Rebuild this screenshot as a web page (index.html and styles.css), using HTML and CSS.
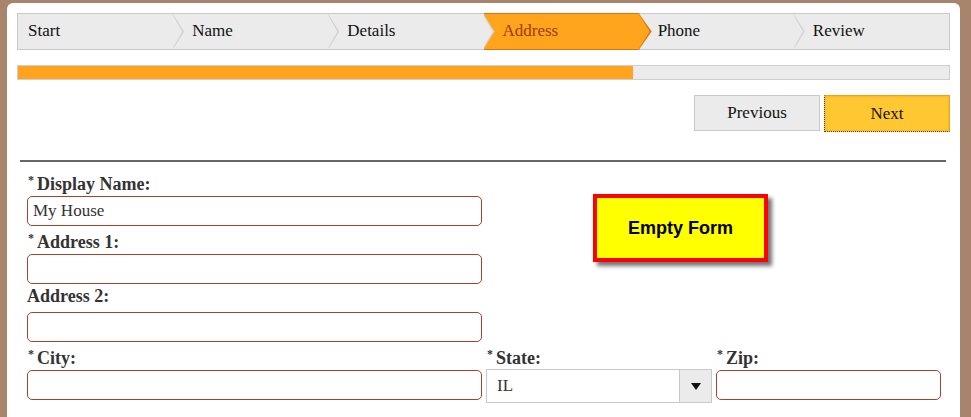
FILE: index.html
```html
<!DOCTYPE html>
<html>
<head>
<meta charset="utf-8">
<title>Wizard</title>
<link rel="stylesheet" href="styles.css">
</head>
<body>
<div class="panel">
  <ol class="steps">
    <li class="step first">Start</li>
    <li class="step">Name</li>
    <li class="step">Details</li>
    <li class="step active">Address</li>
    <li class="step">Phone</li>
    <li class="step last">Review</li>
  </ol>
  <div class="progress"><div class="bar" style="width:66.1%"></div></div>
  <div class="nav">
    <button class="btn prev">Previous</button>
    <button class="btn next">Next</button>
  </div>
  <hr class="rule">
  <form class="form">
    <div class="field f-name">
      <label class="lbl"><span class="req">*</span>Display Name:</label>
      <div class="input">My House</div>
    </div>
    <div class="field f-addr1">
      <label class="lbl"><span class="req">*</span>Address 1:</label>
      <div class="input"></div>
    </div>
    <div class="field f-addr2">
      <label class="lbl">Address 2:</label>
      <div class="input"></div>
    </div>
    <div class="field f-city">
      <label class="lbl"><span class="req">*</span>City:</label>
      <div class="input"></div>
    </div>
    <div class="field f-state">
      <label class="lbl"><span class="req">*</span>State:</label>
      <div class="select"><span class="sel-value">IL</span><span class="sel-arrow"><span class="tri"></span></span></div>
    </div>
    <div class="field f-zip">
      <label class="lbl"><span class="req">*</span>Zip:</label>
      <div class="input"></div>
    </div>
    <div class="note">Empty Form</div>
  </form>
</div>
</body>
</html>
```
FILE: styles.css
```css
html, body {
  margin: 0;
}
body {
  background: #a8846c;
  padding: 3px 11px 0 7px;
  height: 417px;
  box-sizing: border-box;
  overflow: hidden;
  font-family: "Liberation Serif", "Times New Roman", serif;
}
.panel {
  background: #fff;
  border-radius: 6px 6px 0 0;
  padding: 10px 10px 40px;
}
.steps {
  list-style: none;
  margin: 0;
  padding: 0;
  display: grid;
  grid-template-columns: repeat(6, 1fr);
  height: 35px;
  border: 1px solid #c9c9c9;
  background: #ebebeb;
}
.step {
  position: relative;
  display: flex;
  align-items: center;
  padding-left: 19px;
  padding-bottom: 2px;
  font-size: 17px;
  color: #111;
  min-width: 0;
}
.step.first {
  padding-left: 10px;
}
.step::before,
.step::after {
  content: "";
  position: absolute;
  top: 0;
  height: 100%;
  clip-path: polygon(0 0, 100% 50%, 0 100%);
  z-index: 1;
}
.step::before {
  width: 11px;
  right: -11px;
  background: #d4d4d4;
}
.step::after {
  width: 10px;
  right: -9px;
  background: #ebebeb;
  z-index: 2;
}
.step.last::before,
.step.last::after {
  display: none;
}
.step.active {
  background: #ffa41c;
  color: #9a3c0c;
  margin: -1px 0;
  border-top: 1px solid #d9760c;
  border-bottom: 1px solid #d9760c;
}
.step.active::before {
  top: -1px;
  height: calc(100% + 2px);
  width: 13px;
  right: -13px;
  background: #d9760c;
}
.step.active::after {
  top: 0;
  height: 100%;
  width: 11px;
  right: -11px;
  background: #ffa41c;
}
.progress {
  margin-top: 15px;
  height: 13px;
  border: 1px solid #cfcfcf;
  background: #ebebeb;
}
.bar {
  height: 100%;
  background: #ffa41c;
}
.nav {
  display: flex;
  justify-content: flex-end;
  gap: 4px;
  margin-top: 15px;
}
.btn {
  width: 126px;
  height: 36px;
  font-family: "Liberation Serif", "Times New Roman", serif;
  font-size: 17px;
  color: #111;
  cursor: pointer;
  padding: 0;
}
.btn.prev {
  background: #ebebeb;
  border: 1px solid #c9c9c9;
}
.btn.next {
  background: #ffc832;
  height: 37px;
  border-top: 1px solid #e9a21a;
  border-right: 1px solid #e9a21a;
  border-left: 1px dotted #444;
  border-bottom: 1px dotted #444;
  box-shadow: inset 0 0 3px rgba(230, 150, 20, 0.6);
}
.rule {
  border: 0;
  height: 2px;
  background: #666;
  margin: 28px 4px 0 3px;
}
.form {
  display: grid;
  grid-template-columns: 455fr 226fr 225fr;
  column-gap: 4px;
  row-gap: 2px;
  padding: 8px 9px 0 10px;
}
.field {
  display: flex;
  flex-direction: column;
}
.f-name { grid-column: 1; grid-row: 1; }
.f-addr1 { grid-column: 1; grid-row: 2; }
.f-addr2 { grid-column: 1; grid-row: 3; }
.f-city { grid-column: 1; grid-row: 4; }
.f-state { grid-column: 2; grid-row: 4; }
.f-zip { grid-column: 3; grid-row: 4; }
.lbl {
  display: block;
  line-height: 20px;
  height: 26px;
  font-size: 18px;
  font-weight: bold;
  color: #333;
}
.req {
  font-size: 12px;
  vertical-align: 6px;
  margin: 0 3px 0 1px;
}
.input {
  height: 30px;
  box-sizing: border-box;
  border: 1px solid #a2452f;
  border-radius: 5px;
  padding: 0 5px;
  font-size: 17px;
  line-height: 28px;
  color: #333;
}
.select {
  display: flex;
  height: 34px;
  margin-top: -1px;
  box-sizing: border-box;
  border: 1px solid #c9c9c9;
}
.sel-value {
  flex: 1;
  padding-left: 10px;
  font-size: 17px;
  line-height: 32px;
  color: #333;
}
.sel-arrow {
  width: 31px;
  background: #ebebeb;
  border-left: 1px solid #c9c9c9;
  display: flex;
  align-items: center;
  justify-content: center;
}
.tri {
  width: 0;
  height: 0;
  border-left: 5px solid transparent;
  border-right: 5px solid transparent;
  border-top: 7px solid #111;
}
.note {
  grid-column: 2 / 4;
  grid-row: 1 / 3;
  align-self: start;
  justify-self: start;
  margin: 24px 0 0 107px;
  width: 175px;
  height: 68px;
  box-sizing: border-box;
  background: #ffff00;
  border: 4px solid #ff0000;
  box-shadow: 4px 4px 4px rgba(0, 0, 0, 0.55);
  display: flex;
  align-items: center;
  justify-content: center;
  font-family: "Liberation Sans", Arial, sans-serif;
  font-weight: bold;
  font-size: 18px;
  color: #000;
}
```
